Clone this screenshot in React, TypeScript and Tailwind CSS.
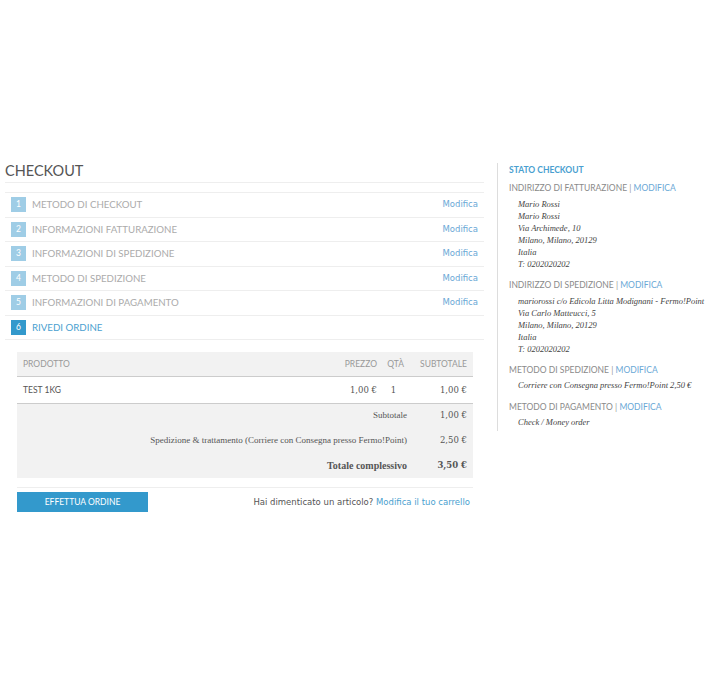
import React from "react";

const steps = [
  "METODO DI CHECKOUT",
  "INFORMAZIONI FATTURAZIONE",
  "INFORMAZIONI DI SPEDIZIONE",
  "METODO DI SPEDIZIONE",
  "INFORMAZIONI DI PAGAMENTO",
];

const raleway = { fontFamily: "Lato, 'Open Sans', sans-serif" };
const serif = { fontFamily: "'Liberation Serif', serif" };
const numSerif = { fontFamily: "'DejaVu Serif', serif" };

function SideHead({ title }: { title: string }) {
  return (
    <div className="text-[8.5px] leading-[12px] text-[#8a8a8a]" style={raleway}>
      {title} <span className="text-[#999]">|</span> <span className="text-[#6aa8d6]">MODIFICA</span>
    </div>
  );
}

export default function App() {
  return (
    <div className="w-[725px] h-[680px] bg-white pt-[161px] flex" style={raleway}>
      {/* main column */}
      <div className="ml-[5px] w-[479px] flex flex-col">
        <div className="text-[14.5px] leading-[20px] text-[#555] pb-[1px] border-b border-[#eeeeee]">
          CHECKOUT
        </div>
        <div className="mt-[9px] border-t border-[#eeeeee]">
          {steps.map((s, i) => (
            <div key={s} className="h-[24.5px] flex items-center border-b border-[#eeeeee] pl-[6px] pr-[6px]">
              <div className="w-[15px] h-[15px] bg-[#9fcde6] text-white text-[8.5px] flex items-center justify-center">{i + 1}</div>
              <div className="ml-[6px] text-[9.7px] text-[#ababab] flex-1">{s}</div>
              <div className="text-[8.5px] text-[#6aa8d6]" style={{ fontFamily: "'DejaVu Sans', sans-serif" }}>Modifica</div>
            </div>
          ))}
          <div className="h-[24.5px] flex items-center border-b border-[#eeeeee] pl-[6px]">
            <div className="w-[15px] h-[15px] bg-[#3399cc] text-white text-[8.5px] flex items-center justify-center">6</div>
            <div className="ml-[6px] text-[9.7px] text-[#4a9fd0]">RIVEDI ORDINE</div>
          </div>
        </div>

        <div className="mx-[12px] mt-[12px] w-[456px]">
          <div className="h-[25px] bg-[#f2f2f2] border-b border-[#cccccc] flex items-center text-[8.5px] text-[#999] px-[6px]">
            <div className="flex-1">PRODOTTO</div>
            <div className="w-[54px] text-right">PREZZO</div>
            <div className="w-[27px] text-right">QTÀ</div>
            <div className="w-[63px] text-right">SUBTOTALE</div>
          </div>
          <div className="h-[27px] border-b border-[#cccccc] flex items-center text-[8.5px] text-[#555] px-[6px]">
            <div className="flex-1">TEST 1KG</div>
            <div className="w-[54px] text-right" style={numSerif}>1,00 €</div>
            <div className="w-[27px] text-center pl-[6px]" style={numSerif}>1</div>
            <div className="w-[63px] text-right" style={numSerif}>1,00 €</div>
          </div>
          <div className="bg-[#f2f2f2] h-[74px] flex flex-col justify-center gap-[11px] px-[6px] text-[8.5px] text-[#555]" style={serif}>
            <div className="flex items-center">
              <div className="flex-1 text-right pr-[20px] text-[9px]">Subtotale</div>
              <div className="w-[40px] text-right" style={numSerif}>1,00 €</div>
            </div>
            <div className="flex items-center">
              <div className="flex-1 text-right pr-[20px] text-[9px]">Spedizione &amp; trattamento (Corriere con Consegna presso Fermo!Point)</div>
              <div className="w-[40px] text-right" style={numSerif}>2,50 €</div>
            </div>
            <div className="flex items-center font-bold">
              <div className="flex-1 text-right pr-[20px] text-[10px]">Totale complessivo</div>
              <div className="w-[40px] text-right" style={numSerif}>3,50 €</div>
            </div>
          </div>
          <div className="mt-[9px] border-t border-[#eeeeee] pt-[4px] flex items-center justify-between">
            <div className="w-[131px] h-[20px] bg-[#3399cc] text-white text-[8.5px] flex items-center justify-center">EFFETTUA ORDINE</div>
            <div className="text-[8.5px] text-[#555] pr-[3px]" style={{ fontFamily: "'DejaVu Sans', sans-serif" }}>
              Hai dimenticato un articolo? <span className="text-[#4a9fd0]">Modifica il tuo carrello</span>
            </div>
          </div>
        </div>
      </div>

      {/* sidebar */}
      <div className="ml-[13px] mt-[2px] self-start border-l border-[#dddddd] pl-[11px] pb-[3px] w-[220px]">
        <div className="text-[8.5px] leading-[12px] font-bold text-[#4a9fd0] mt-[1px]">STATO CHECKOUT</div>
        <div className="mt-[6px]"><SideHead title="INDIRIZZO DI FATTURAZIONE" /></div>
        <div className="pl-[9px] mt-[4px] italic text-[8.5px] leading-[12px] text-[#444]" style={serif}>
          <div>Mario Rossi</div>
          <div>Mario Rossi</div>
          <div>Via Archimede, 10</div>
          <div>Milano, Milano, 20129</div>
          <div>Italia</div>
          <div>T: 0202020202</div>
        </div>
        <div className="mt-[9px]"><SideHead title="INDIRIZZO DI SPEDIZIONE" /></div>
        <div className="pl-[9px] mt-[4px] italic text-[8.5px] leading-[12px] text-[#444]" style={serif}>
          <div>mariorossi c/o Edicola Litta Modignani - Fermo!Point</div>
          <div>Via Carlo Matteucci, 5</div>
          <div>Milano, Milano, 20129</div>
          <div>Italia</div>
          <div>T: 0202020202</div>
        </div>
        <div className="mt-[9px]"><SideHead title="METODO DI SPEDIZIONE" /></div>
        <div className="pl-[9px] mt-[3px] italic text-[8.5px] leading-[12px] text-[#444]" style={serif}>
          Corriere con Consegna presso Fermo!Point 2,50 €
        </div>
        <div className="mt-[10px]"><SideHead title="METODO DI PAGAMENTO" /></div>
        <div className="pl-[9px] mt-[3px] italic text-[8.5px] leading-[12px] text-[#444]" style={serif}>
          Check / Money order
        </div>
      </div>
    </div>
  );
}
